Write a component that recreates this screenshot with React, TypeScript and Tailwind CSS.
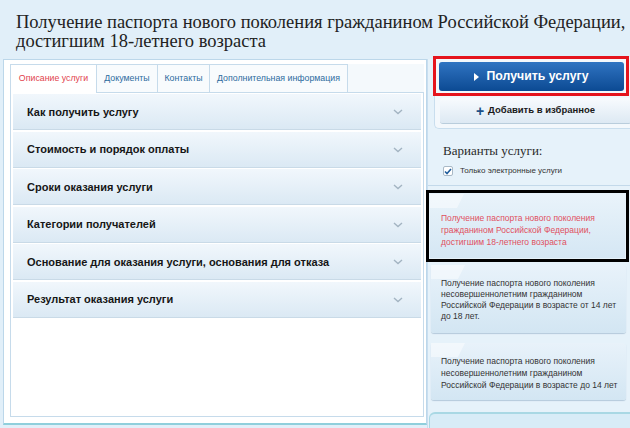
import React from "react";

const rows = [
  "Как получить услугу",
  "Стоимость и порядок оплаты",
  "Сроки оказания услуги",
  "Категории получателей",
  "Основание для оказания услуги, основания для отказа",
  "Результат оказания услуги",
];

const tabs = [
  { t: "Описание услуги", w: "w-[87px]", active: true },
  { t: "Документы", w: "w-[61px]", active: false },
  { t: "Контакты", w: "w-[52px]", active: false },
  { t: "Дополнительная информация", w: "w-[138px]", active: false },
];

function Chevron() {
  return (
    <svg width="10" height="6" viewBox="0 0 10 6" className="shrink-0">
      <polyline points="1,1 5,4.5 9,1" fill="none" stroke="#a3b4c2" strokeWidth="1.4" />
    </svg>
  );
}

function Gloss() {
  return (
    <svg width="40" height="14" viewBox="0 0 40 14" className="absolute left-0 top-0">
      <polygon points="0,0 34,0 27,14 0,14" fill="#ffffff" opacity="0.45" />
    </svg>
  );
}

export default function App() {
  return (
    <div
      className="w-[630px] h-[428px] overflow-hidden bg-[#e1eff9] text-[#1a1a1a]"
      style={{ fontFamily: '"Liberation Sans", Arial, sans-serif' }}
    >
      <h1
        className="h-[59px] pl-[16px] pt-[13px] text-[18.5px] leading-[19px] text-[#222] whitespace-nowrap"
        style={{ fontFamily: '"Liberation Serif", "Times New Roman", serif' }}
      >
        Получение паспорта нового поколения гражданином Российской Федерации,
        <br />
        достигшим 18-летнего возраста
      </h1>
      <div className="flex items-start">
        {/* Left panel */}
        <div className="ml-[3px] w-[424px] h-[366px] shrink-0 bg-white border border-[#bcd7ea] border-b-2 border-b-[#8fcfdc] pt-[4px] pl-[6px] pr-[2px] flex flex-col">
          <div className="flex h-[28px] shrink-0 bg-[#f4f9fc]">
            {tabs.map((tab) => (
              <div
                key={tab.t}
                className={
                  tab.active
                    ? `${tab.w} h-[29px] bg-white border border-b-0 border-[#c6dbeb] flex items-center justify-center text-[8.8px] text-[#e2434d] relative z-10`
                    : `${tab.w} h-[28px] bg-[#f8fbfd] border border-l-0 border-b-0 border-[#c6dbeb] flex items-center justify-center text-[8.8px] text-[#2d6b9e]`
                }
              >
                {tab.t}
              </div>
            ))}
            <div className="flex-1" />
          </div>
          <div className="h-[325px] shrink-0 border border-[#c6dbeb] pt-[1px] px-[2px] flex flex-col gap-[1.5px]">
            {rows.map((r) => (
              <div
                key={r}
                className="h-[36px] shrink-0 flex items-center justify-between pl-[14px] pr-[18px] pt-[1px] bg-gradient-to-b from-[#f1f7fc] to-[#dbe9f4] border-b border-[#c9dae7]"
              >
                <span className="text-[11px] font-bold text-[#161616]">{r}</span>
                <Chevron />
              </div>
            ))}
          </div>
        </div>

        {/* Right column */}
        <div className="w-[203px] h-[369px] shrink-0 bg-[#e6f2fa] border-l border-[#c8def0] flex flex-col">
          {/* top box */}
          <div className="ml-[6px] -mt-[2px] h-[72px] shrink-0 bg-[#f3f8fc] border border-t-0 border-r-0 border-[#c9deee] rounded-bl-[5px] relative">
            <div className="absolute -left-[2px] -top-[1px] w-[196px] h-[40px] border-[3px] border-[#e5141d] p-[3px] pb-[1px]">
              <div className="h-[29px] w-[185px] rounded-[3px] bg-gradient-to-b from-[#2f74c2] to-[#0b4a93] flex items-center justify-center gap-[7px]">
                <svg width="5" height="8" viewBox="0 0 5 8">
                  <polygon points="0,0 5,4 0,8" fill="#ffffff" />
                </svg>
                <span className="text-[12.3px] font-bold text-white">Получить услугу</span>
              </div>
            </div>
            <div className="absolute left-[5px] top-[41px] w-[191px] h-[26px] rounded-[3px] bg-gradient-to-b from-[#f8fbfe] to-[#dde9f3] border-b border-[#b9cddc] flex items-center justify-center gap-[4px]">
              <span className="text-[14px] leading-[14px] font-bold text-[#1b4f86]">+</span>
              <span className="text-[9.5px] font-bold text-[#1a1a1a]">Добавить в избранное</span>
            </div>
          </div>
          <div className="h-[57px] shrink-0 pl-[15px] pt-[14px] border-b border-[#c3d9ea]">
            <div
              className="text-[13px] leading-[16px] text-[#2a2a2a]"
              style={{ fontFamily: '"Liberation Serif", "Times New Roman", serif' }}
            >
              Варианты услуги:
            </div>
            <div className="flex items-center gap-[7px] mt-[6px]">
              <div className="w-[10px] h-[10px] bg-white border border-[#a9b9c6] rounded-[2px] flex items-center justify-center">
                <svg width="8" height="7" viewBox="0 0 8 7">
                  <polyline points="1,3.5 3,5.5 7,1" fill="none" stroke="#1f5d9c" strokeWidth="1.6" />
                </svg>
              </div>
              <span className="text-[8px] text-[#333]">Только электронные услуги</span>
            </div>
          </div>
          {/* variants */}
          <div className="pt-[4px] flex flex-col">
            <div className="w-[203px] h-[72px] shrink-0 border-[3px] border-black -ml-[2px] p-[1px]">
              <div className="h-full bg-gradient-to-b from-[#e9f3fa] to-[#d5e7f4] pl-[11px] pt-[18px] text-[8.5px] leading-[12px] text-[#e0505f] relative">
                <Gloss />
                <div className="relative">
                  Получение паспорта нового поколения
                  <br />
                  гражданином Российской Федерации,
                  <br />
                  достигшим 18-летнего возраста
                </div>
              </div>
            </div>
            <div className="ml-[3px] mt-[3px] w-[195px] h-[68px] shrink-0 rounded-[3px] bg-gradient-to-b from-[#e8f2fa] to-[#d3e6f3] shadow-[0_1px_1px_rgba(120,150,180,0.45)] pl-[10px] pt-[13px] text-[8.5px] leading-[11px] text-[#333] relative">
              <Gloss />
              <div className="relative">
                Получение паспорта нового поколения
                <br />
                несовершеннолетним гражданином
                <br />
                Российской Федерации в возрасте от 14 лет
                <br />
                до 18 лет.
              </div>
            </div>
            <div className="ml-[3px] mt-[10px] w-[195px] h-[57px] shrink-0 rounded-[3px] bg-gradient-to-b from-[#e8f2fa] to-[#d3e6f3] shadow-[0_1px_1px_rgba(120,150,180,0.45)] pl-[10px] pt-[12px] text-[8.5px] leading-[12px] text-[#333] relative">
              <Gloss />
              <div className="relative">
                Получение паспорта нового поколения
                <br />
                несовершеннолетним гражданином
                <br />
                Российской Федерации в возрасте до 14 лет
              </div>
            </div>
            <div className="ml-[1px] mt-[12px] h-[20px] shrink-0 rounded-tl-[6px] bg-[#d8ecf7] border-t-2 border-l border-[#a9d8e4]" />
          </div>
        </div>
      </div>
    </div>
  );
}
